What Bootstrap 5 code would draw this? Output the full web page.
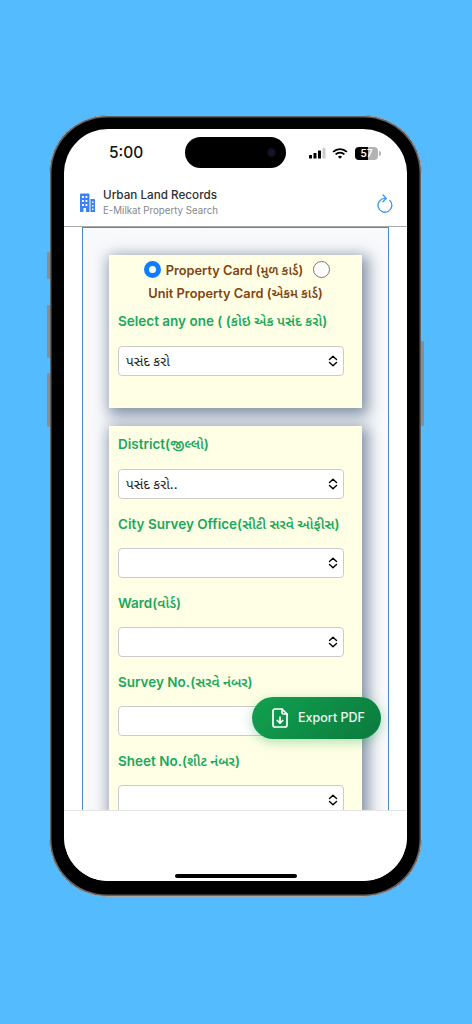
<!DOCTYPE html>
<html lang="gu">
<head>
<meta charset="utf-8">
<title>Urban Land Records</title>
<link href="https://cdn.jsdelivr.net/npm/bootstrap@5.3.0/dist/css/bootstrap.min.css" rel="stylesheet">
<style>
html,body{height:100%;}
body{background:#54bbff;font-family:Inter,"Noto Sans Gujarati","Noto Sans",Roboto,sans-serif;padding-top:115px;overflow:hidden;}
.phone-shell{position:relative;width:373px;height:782px;margin-left:49px;padding:13px 14px 15px;background:#000;border-radius:58px;border:1px solid #a4a8ab;box-shadow:inset 0 0 0 1.5px #5d6165;}
.side-key{position:absolute;width:3px;background:#8a8d90;border-radius:1px;}
.key-a{left:-3px;top:136px;height:27px;}
.key-b{left:-3px;top:189px;height:53px;}
.key-c{left:-3px;top:257px;height:54px;}
.key-d{right:-3px;top:225px;height:85px;}
.phone-screen{position:relative;height:100%;background:#fff;border-radius:44px;overflow:hidden;}
.island{position:absolute;left:121px;top:8px;width:101px;height:31px;background:#000;border-radius:16px;}
.island-lens{position:absolute;right:10px;top:11px;width:9px;height:9px;border-radius:50%;background:#14143c;border:2px solid #101018;}
.status-row{height:50px;padding:0 26px 2px 45px;}
.clock{font-size:15.5px;font-weight:500;color:#111;}
.wifi-mark{margin-left:6px;}
.batt{width:23px;height:13px;margin-left:7px;border-radius:4px;background:linear-gradient(90deg,#000 57%,#b3b3b3 57%);color:#fff;font-size:10px;font-weight:600;line-height:13px;text-align:center;}
.batt-tip{width:2px;height:5px;margin-left:1px;background:#b3b3b3;border-radius:0 2px 2px 0;}
.app-head{height:48px;padding:1px 14px 0 15px;border-bottom:1.5px solid #a9a9a9;}
.app-title{font-size:11.7px;font-weight:500;color:#2b2f33;line-height:15px;}
.app-sub{font-size:9.7px;color:#84888c;line-height:15px;}
.scroll-zone{height:582.5px;padding:0 18px;overflow:hidden;}
.outer-frame{min-height:700px;background:#f8f9fb;border:1px solid #4a8dbb;border-top-width:1.5px;padding:27px 26px 0;}
.sheet-box{background:#ffffe6;box-shadow:3px 4px 14px 3px rgba(52,78,110,.62);padding:0 18px 0 9px;width:253px;}
.sheet-one{height:153px;margin-bottom:18px;}
.radio-line{color:#84430f;font-size:12.8px;font-weight:600;line-height:22px;margin-right:-9px;}
.radio-first{padding-left:3px;align-items:flex-start;}
.radio-first label{margin:5px 10px 0 5px;}
.radio-second{margin-top:1px;}
.radio-mark{width:17px;height:17px;margin:6px 0 0;flex:none;border:1px solid #777;}
.radio-mark:checked{background-color:#fff;border-color:#0d7eff;border-width:5.5px;background-image:none;}
.green-label{display:block;color:#1aa85c;font-size:13.5px;font-weight:600;margin:0;line-height:19px;white-space:nowrap;}
.label-any{margin-top:7px;}
.pick{height:30px;padding:0 24px 0 7px;font-size:13.5px;color:#222;border:1px solid #cbcbcb;border-radius:4px;}
select.pick{background-image:url("data:image/svg+xml,%3csvg xmlns='http://www.w3.org/2000/svg' viewBox='0 0 10 12'%3e%3cpath fill='none' stroke='%23000' stroke-width='1.4' stroke-linecap='round' stroke-linejoin='round' d='M1.500 4.500 5 1.200 8.500 4.500M1.500 7.500 5 10.800 8.500 7.500'/%3e%3c/svg%3e");background-size:10px 12px;background-position:right 5px center;}
.top-pick{margin-top:15px;}
.field-label{padding-top:16px;height:49px;}
.field-first{padding-top:9px;height:43px;}
.export-fab{position:absolute;left:188px;top:568px;width:129px;height:42px;padding:0 0 0 4px;gap:10px;border-radius:21px;border:0;background:linear-gradient(135deg,#12a150,#0b7a3d);color:#f2f6f3;font-size:12.5px;font-weight:500;box-shadow:0 3px 12px rgba(22,163,74,.35);}
.bottom-band{height:71px;background:#fff;border-top:1px solid #e4e4e4;position:relative;}
.home-bar{position:absolute;left:111px;top:63px;width:122px;height:4px;border-radius:2px;background:#000;}
</style>
</head>
<body>
<div class="phone-shell">
  <span class="side-key key-a"></span><span class="side-key key-b"></span><span class="side-key key-c"></span><span class="side-key key-d"></span>
  <div class="phone-screen d-flex flex-column">
    <div class="island"><span class="island-lens"></span></div>
    <div class="status-row d-flex align-items-center justify-content-between">
      <span class="clock">5:00</span>
      <div class="d-flex align-items-center">
        <svg width="18" height="12" viewBox="0 0 18 12"><rect x="1" y="8" width="3" height="3.500" rx=".6" fill="#000"/><rect x="5.500" y="6" width="3" height="5.500" rx=".6" fill="#000"/><rect x="10" y="3.500" width="3" height="8" rx=".6" fill="#000"/><rect x="14.500" y="1" width="3" height="10.500" rx=".6" fill="#ccc"/></svg>
        <svg width="16" height="13" viewBox="0 0 17 13" fill="none" stroke="#000" stroke-width="1.800" class="wifi-mark"><path d="M1.200 4.800a10.400 10.400 0 0 1 14.600 0"/><path d="M3.800 7.400a6.700 6.700 0 0 1 9.400 0"/><path d="M8.500 12 6.300 9.900a3.100 3.100 0 0 1 4.400 0Z" fill="#000" stroke="none"/></svg>
        <div class="batt">57</div><span class="batt-tip"></span>
      </div>
    </div>
    <div class="app-head d-flex align-items-center">
      <svg width="16" height="20" viewBox="0 0 16 20" class="me-2 flex-shrink-0"><path d="M1 1.500a1 1 0 0 1 1-1h7.500a1 1 0 0 1 1 1V19H1Z" fill="#3b82f6"/><path d="M11.500 6H15a1 1 0 0 1 1 1v12h-4.500Z" fill="#3b82f6"/><g fill="#fff"><rect x="3" y="3" width="1.800" height="2"/><rect x="6.500" y="3" width="1.800" height="2"/><rect x="3" y="7" width="1.800" height="2"/><rect x="6.500" y="7" width="1.800" height="2"/><rect x="3" y="11" width="1.800" height="2"/><rect x="6.500" y="11" width="1.800" height="2"/><rect x="4.500" y="15" width="2.500" height="4"/><rect x="13" y="8.500" width="1.500" height="1.500"/><rect x="13" y="12" width="1.500" height="1.500"/><rect x="13" y="15.500" width="1.500" height="1.500"/></g></svg>
      <div class="flex-grow-1">
        <div class="app-title">Urban Land Records</div>
        <div class="app-sub">E-Milkat Property Search</div>
      </div>
      <svg width="16" height="19" viewBox="0 0 16 19" fill="none" stroke="#3b8fe8" stroke-width="1.300" stroke-linecap="round" stroke-linejoin="round"><path d="M12.800 6.400A6.900 6.900 0 1 1 8 4.400"/><path d="M6 1 9.300 4.400 6 7.800"/></svg>
    </div>
    <div class="scroll-zone">
      <div class="outer-frame">
        <div class="sheet-box sheet-one">
          <div class="radio-line radio-first d-flex justify-content-center">
            <input class="form-check-input radio-mark" type="radio" name="cardkind" id="r1" checked>
            <label for="r1">Property Card (મુળ કાર્ડ)</label>
            <input class="form-check-input radio-mark" type="radio" name="cardkind" id="r2">
          </div>
          <div class="radio-line radio-second text-center"><label for="r2">Unit Property Card (એકમ કાર્ડ)</label></div>
          <label class="green-label label-any">Select any one ( (કોઇ એક પસંદ કરો)</label>
          <select class="form-select pick top-pick"><option>પસંદ કરો</option></select>
        </div>
        <div class="sheet-box">
          <div class="field-first"><label class="green-label">District(જીલ્લો)</label></div>
          <select class="form-select pick"><option>પસંદ કરો..</option></select>
          <div class="field-label"><label class="green-label">City Survey Office(સીટી સરવે ઓફીસ)</label></div>
          <select class="form-select pick"></select>
          <div class="field-label"><label class="green-label">Ward(વોર્ડ)</label></div>
          <select class="form-select pick"></select>
          <div class="field-label"><label class="green-label">Survey No.(સરવે નંબર)</label></div>
          <input class="form-control pick" type="text">
          <div class="field-label"><label class="green-label">Sheet No.(શીટ નંબર)</label></div>
          <select class="form-select pick"></select>
        </div>
      </div>
    </div>
    <div class="bottom-band"><span class="home-bar"></span></div>
    <button class="export-fab d-flex align-items-center justify-content-center" type="button">
      <svg width="16" height="20" viewBox="0 0 16 20" fill="none" stroke="#fff" stroke-width="1.700" stroke-linecap="round" stroke-linejoin="round"><path d="M3 1h7l5 5v11a2 2 0 0 1-2 2H3a2 2 0 0 1-2-2V3a2 2 0 0 1 2-2Z"/><path d="M10 1v3.500a1.500 1.500 0 0 0 1.500 1.500H15"/><path d="M8 9v6M5.300 12.500 8 15.200l2.700-2.700"/></svg>
      <span>Export PDF</span>
    </button>
  </div>
</div>
<script src="https://cdn.jsdelivr.net/npm/bootstrap@5.3.0/dist/js/bootstrap.bundle.min.js"></script>
</body>
</html>
